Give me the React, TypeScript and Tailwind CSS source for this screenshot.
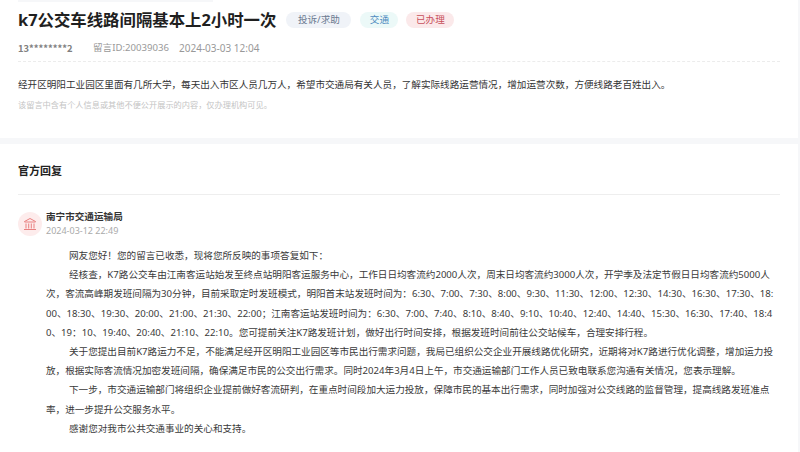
import React from "react";

const paras: { t: string; cls?: string }[] = [
  { t: "网友您好！您的留言已收悉，现将您所反映的事项答复如下：" },
  { t: "经核查，K7路公交车由江南客运站始发至终点站明阳客运服务中心，工作日日均客流约2000人次，周末日均客流约3000人次，开学季及法定节假日日均客流约5000人次，客流高峰期发班间隔为30分钟，目前采取定时发班模式，明阳首末站发班时间为：6:30、7:00、7:30、8:00、9:30、11:30、12:00、12:30、14:30、16:30、17:30、18:00、18:30、19:30、20:00、21:00、21:30、22:00；江南客运站发班时间为：6:30、7:00、7:40、8:10、8:40、9:10、10:40、12:40、14:40、15:30、16:30、17:40、18:40、19：10、19:40、20:40、21:10、22:10。您可提前关注K7路发班计划，做好出行时间安排，根据发班时间前往公交站候车，合理安排行程。" },
  { t: "关于您提出目前K7路运力不足，不能满足经开区明阳工业园区等市民出行需求问题，我局已组织公交企业开展线路优化研究，近期将对K7路进行优化调整，增加运力投放，根据实际客流情况加密发班间隔，确保满足市民的公交出行需求。同时2024年3月4日上午，市交通运输部门工作人员已致电联系您沟通有关情况，您表示理解。" },
  { t: "下一步，市交通运输部门将组织企业提前做好客流研判，在重点时间段加大运力投放，保障市民的基本出行需求，同时加强对公交线路的监督管理，提高线路发班准点率，进一步提升公交服务水平。" },
  { t: "感谢您对我市公共交通事业的关心和支持。" },
];

export default function App() {
  return (
    <div className="w-[800px] h-[452px] overflow-hidden bg-white flex font-['Noto_Sans','Noto_Sans_CJK_SC',sans-serif]">
      <main className="w-[798px] flex flex-col">
        <section className="px-[18px] h-[138px] flex flex-col">
          <div className="w-[195px] h-[2px] bg-[#f6f7f9]" />
          <div className="mt-[6px] flex items-center h-[24px]">
            <h1 className="text-[16.4px] leading-[24px] font-bold text-[#1f1f1f] whitespace-nowrap">k7公交车线路间隔基本上2小时一次</h1>
            <span className="ml-[10px] w-[65px] h-[16px] rounded-full bg-[#f0f3f8] text-[#6b7a90] text-[9.6px] leading-[16px] text-center">投诉/求助</span>
            <span className="ml-[9px] w-[38px] h-[16px] rounded-full bg-[#ecf9f8] text-[#4f8bc0] text-[9.6px] leading-[16px] text-center">交通</span>
            <span className="ml-[8px] w-[48px] h-[16px] rounded-full bg-[#fbe9ea] text-[#c8505a] text-[9.6px] leading-[16px] text-center">已办理</span>
          </div>
          <div className="mt-[9px] flex items-center text-[10px] leading-[14px] text-[#999999] whitespace-nowrap">
            <span className="w-[75px] font-bold text-[9.4px] text-[#808080] font-['Noto_Sans_CJK_SC']">13********2</span>
            <span className="w-[86px] text-[9.6px]">留言ID:20039036</span>
            <span>2024-03-03 12:04</span>
          </div>
          <div className="mt-[6px] border-t border-dashed border-[#ececec]" />
          <p className="mt-[16px] text-[9.6px] leading-[14px] text-[#333333] whitespace-nowrap">经开区明阳工业园区里面有几所大学，每天出入市区人员几万人，希望市交通局有关人员，了解实际线路运营情况，增加运营次数，方便线路老百姓出入。</p>
          <p className="mt-[7px] text-[8.2px] leading-[12px] text-[#c4c4c4] whitespace-nowrap">该留言中含有个人信息或其他不便公开展示的内容，仅办理机构可见。</p>
        </section>
        <div className="h-[6px] bg-[#f6f7f9]" />
        <section className="px-[18px] flex flex-col flex-1">
          <h2 className="mt-[19px] text-[11px] leading-[16px] font-bold text-[#222222]">官方回复</h2>
          <div className="mt-[15px] h-[1px] bg-[#eeeeee]" />
          <div className="mt-[15px] flex items-center">
            <div className="w-[24px] h-[24px] rounded-full bg-[#fdecec] flex items-center justify-center">
              <svg width="14" height="14" viewBox="0 0 14 14" fill="none" stroke="#e98080" strokeWidth="1">
                <path d="M1.5 4.5 7 1.5l5.5 3v.5h-11z" />
                <path d="M3 6.5v5M5.7 6.5v5M8.3 6.5v5M11 6.5v5M1 12.5h12" />
              </svg>
            </div>
            <div className="ml-[4px]">
              <div className="text-[9.6px] leading-[14px] font-bold text-[#333333]">南宁市交通运输局</div>
              <div className="text-[9px] leading-[14px] text-[#aaaaaa]">2024-03-12 22:49</div>
            </div>
          </div>
          <div className="mt-[8px] ml-[28px] w-[731px] text-[9.6px] leading-[19.2px] text-[#3a3a3a] break-all">
            {paras.map((p, i) => (
              <p key={i} className="indent-[23px]">{p.t}</p>
            ))}
          </div>
        </section>
      </main>
      <div className="w-[2px] bg-[#f6f7f9]" />
    </div>
  );
}
